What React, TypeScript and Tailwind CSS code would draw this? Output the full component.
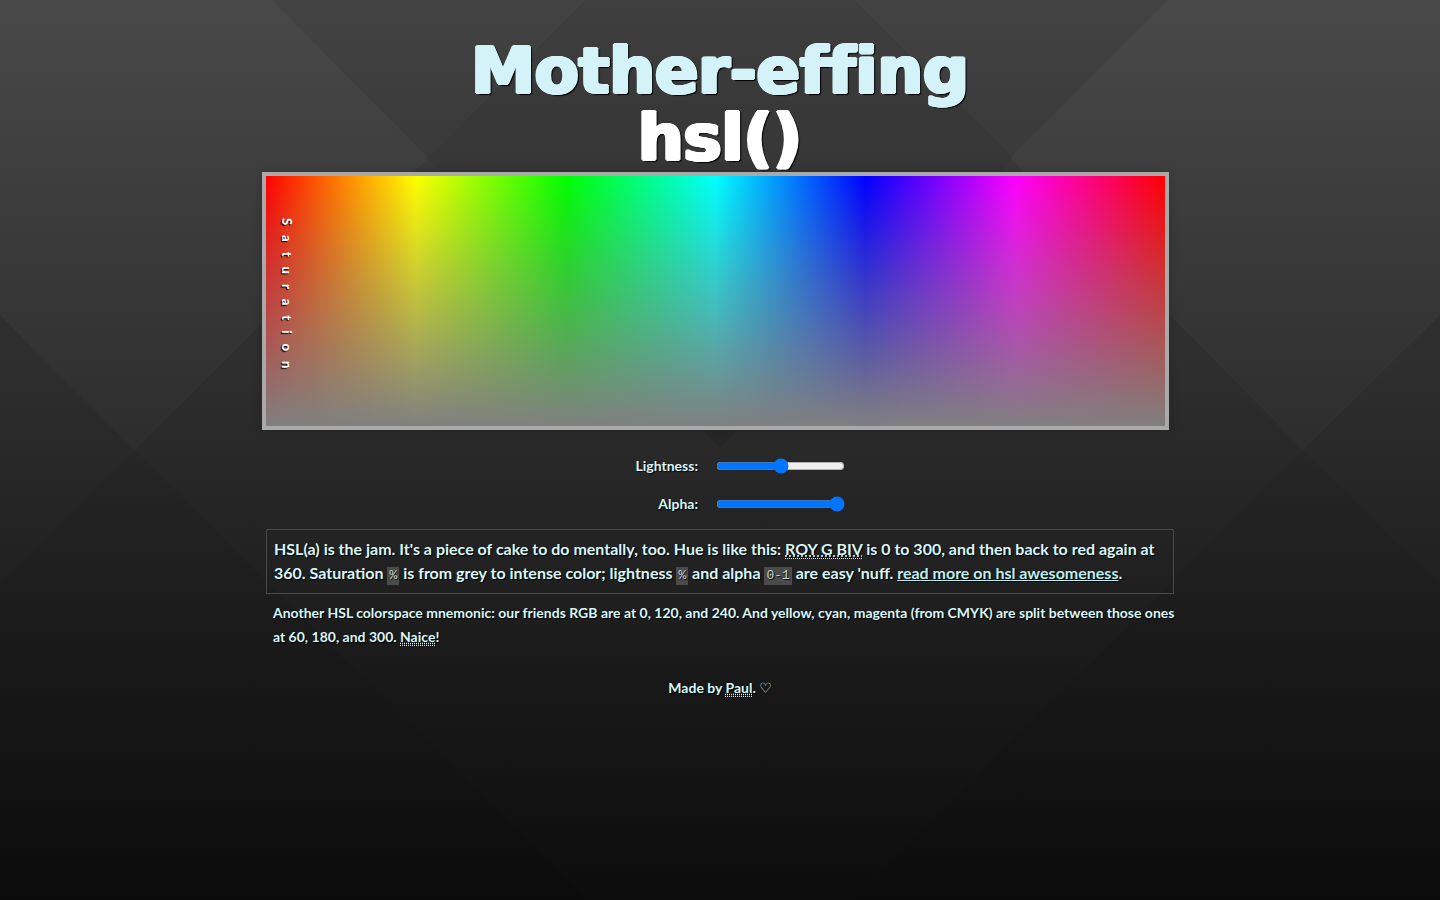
import { useState } from "react";

const HUES = [0, 60, 120, 180, 240, 300, 360];

const BODY_FONT = "font-['Lato','Open_Sans','DejaVu_Sans',sans-serif]";
const DOTTED = "border-b border-dotted border-[#d6f4f8] underline decoration-dotted";

function Backdrop() {
  return (
    <svg
      aria-hidden="true"
      className="absolute inset-0 -z-10 h-full w-full"
      viewBox="0 0 1440 900"
      preserveAspectRatio="none"
    >
      <defs>
        <linearGradient id="fade" x1="0" y1="0" x2="0" y2="1">
          <stop offset="0" stopColor="#494949" />
          <stop offset="0.25" stopColor="#3b3b3b" />
          <stop offset="0.5" stopColor="#2d2d2d" />
          <stop offset="0.75" stopColor="#1c1c1c" />
          <stop offset="1" stopColor="#0e0e0e" />
        </linearGradient>
      </defs>
      <rect width="1440" height="900" fill="url(#fade)" />
      <g fill="#000">
        <path d="M272 0H1168L1010 158L1175 320L1303 450L1440 315V900H0V315L135 450L428 158Z" opacity="0.08" />
        <path d="M585 0H855L1013 158L720 448L428 158Z" opacity="0.05" />
        <path d="M135 450L0 585V900H585ZM1303 450L1440 585V900H855Z" opacity="0.04" />
      </g>
    </svg>
  );
}

function Code({ children }: { children: string }) {
  return (
    <code className="inline-block bg-[#4b4b4b] px-[2px] font-['Liberation_Mono',monospace] text-[13px] leading-[18px] font-normal text-[#c6d2d3]">
      {children}
    </code>
  );
}

export default function App() {
  const [lightness, setLightness] = useState(50);
  const [alpha, setAlpha] = useState(100);

  const stops = HUES.map((h) => `hsl(${h} 100% ${lightness}%)`).join(", ");
  const grey = `${lightness}%`;

  return (
    <div
      className={`relative isolate min-h-screen text-[#d8f6f8] [text-shadow:1px_1px_1px_#000] ${BODY_FONT}`}
    >
      <Backdrop />
      <div className="mx-auto max-w-[908px] pt-[38px]">
        <h1 className="text-center font-['DejaVu_Sans',sans-serif] text-[64px] leading-[67px] font-bold [font-variant-ligatures:none]">
          <span className="block text-[#d4f3f8] [text-shadow:2px_0_#d4f3f8,-2px_0_#d4f3f8,0_1px_#d4f3f8,0_-1px_#d4f3f8,1px_1px_#d4f3f8,-1px_1px_#d4f3f8,1px_-1px_#d4f3f8,-1px_-1px_#d4f3f8,3px_1px_1px_#000,2px_2px_1px_#000]">
            Mother-effing
          </span>
          <span className="block text-white [text-shadow:2px_0_#fff,-2px_0_#fff,0_1px_#fff,0_-1px_#fff,1px_1px_#fff,-1px_1px_#fff,1px_-1px_#fff,-1px_-1px_#fff,3px_1px_1px_#000,2px_2px_1px_#000]">
            hsl()
          </span>
        </h1>

        <div className="-ml-1 mr-[5px] border-4 border-[#a9a9a9] shadow-[0_0_10px_rgba(0,0,0,0.2)]">
          <div
            className="h-[250px] py-[42px] pl-3"
            style={{
              opacity: alpha / 100,
              backgroundImage: `linear-gradient(to bottom, hsl(0 0% ${grey} / 0), hsl(0 0% ${grey})), linear-gradient(to right, ${stops})`,
            }}
          >
            <span className="block text-[13px] leading-[18px] font-black tracking-[10px] text-white [writing-mode:vertical-rl] [text-shadow:1px_1px_1px_#000]">
              Saturation
            </span>
          </div>
        </div>

        <form className="mt-[17px] text-[14px] font-bold">
          <div className="flex h-[38px] items-center">
            <label htmlFor="lightness" className="w-[432px] pb-[2px] text-right">
              Lightness:
            </label>
            <input
              id="lightness"
              type="range"
              min={0}
              max={100}
              value={lightness}
              onChange={(e) => setLightness(Number(e.target.value))}
              className="ml-[18px] w-[129px]"
            />
          </div>
          <div className="flex h-[38px] items-center">
            <label htmlFor="alpha" className="w-[432px] pb-[2px] text-right">
              Alpha:
            </label>
            <input
              id="alpha"
              type="range"
              min={0}
              max={100}
              value={alpha}
              onChange={(e) => setAlpha(Number(e.target.value))}
              className="ml-[18px] w-[129px]"
            />
          </div>
        </form>

        <p className="mt-[6px] border border-[#4a4a4a] px-[7px] pt-[7px] pb-2 text-[16px] leading-6 font-bold">
          HSL(a) is the jam. It's a piece of cake to do mentally, too. Hue is like this:{" "}
          <abbr title="Red Orange Yellow Green Blue Indigo Violet" className={DOTTED}>
            ROY G BIV
          </abbr>{" "}
          is 0 to 300, and then back to red again at 360. Saturation <Code>%</Code> is from grey to
          intense color; lightness <Code>%</Code> and alpha <Code>0-1</Code> are easy 'nuff.{" "}
          <a href="#more" className="text-[#bdeef2] underline">
            read more on hsl awesomeness
          </a>
          .
        </p>
        <p className="mt-[7px] -mr-3 pl-[7px] text-[14px] leading-6 font-bold">
          Another HSL colorspace mnemonic: our friends RGB are at 0, 120, and 240. And yellow, cyan,
          magenta (from CMYK) are split between those ones at 60, 180, and 300.{" "}
          <a href="#naice" className={DOTTED}>
            Naice
          </a>
          !
        </p>
        <footer className="mt-[27px] text-center text-[14px] leading-6 font-bold">
          Made by{" "}
          <a href="#paul" className={DOTTED}>
            Paul
          </a>
          . ♡
        </footer>
      </div>
    </div>
  );
}
